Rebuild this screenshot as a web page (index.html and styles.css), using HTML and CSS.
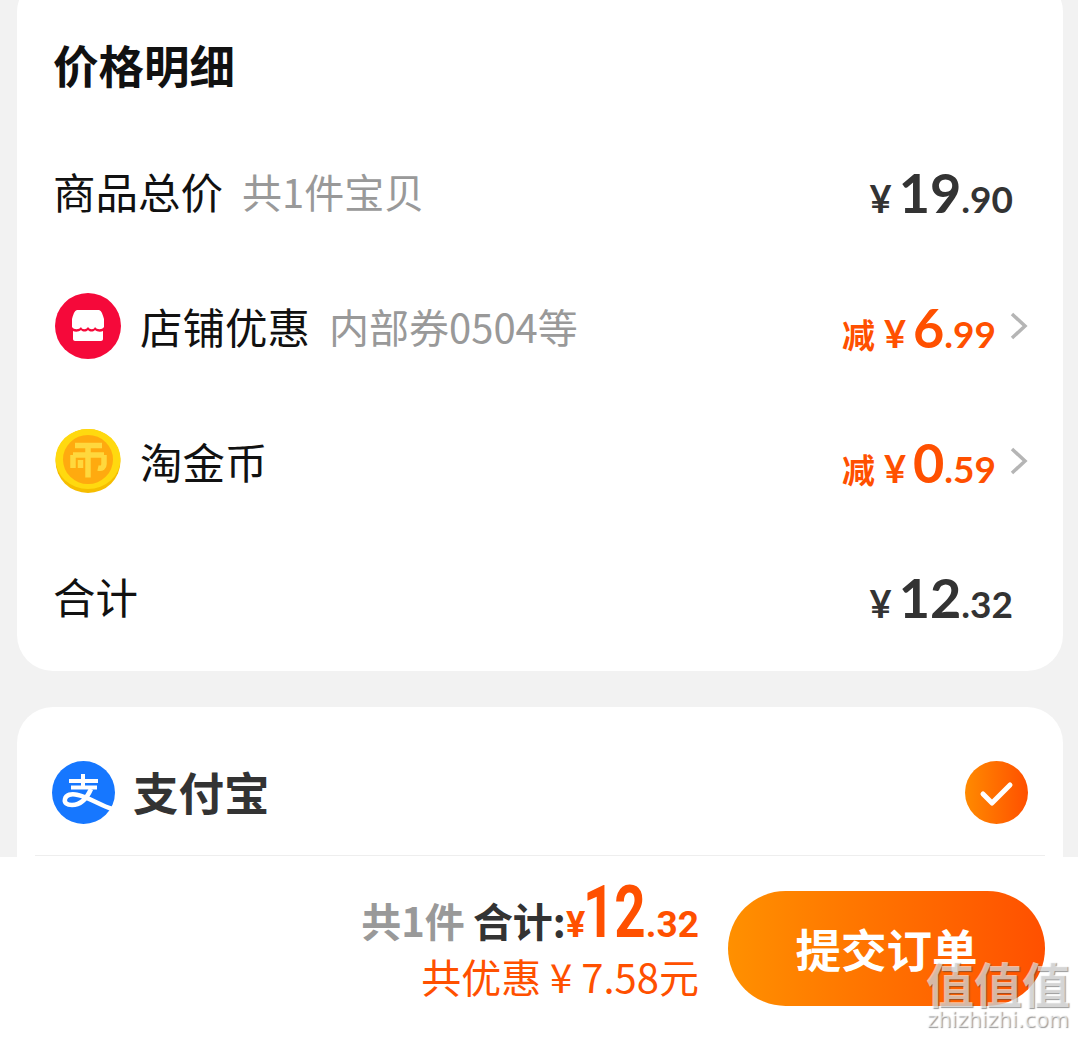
FILE: index.html
```html
<!DOCTYPE html>
<html lang="zh">
<head>
  <meta charset="utf-8" />
  <title>价格明细</title>
  <link rel="stylesheet" href="styles.css">
</head>
<body>
  <div class="page">
    <div class="main">
      <!-- price card -->
      <div class="card card--price">
        <h2 class="card__title">价格明细</h2>

        <div class="row">
          <div class="row__left">
            <span class="row__label">商品总价</span>
            <span class="row__sub">共1件宝贝</span>
          </div>
          <div class="price"><span class="price__sym">¥</span><span class="price__int">19</span><span class="price__dec">.90</span></div>
        </div>

        <div class="row row--more">
          <div class="row__left">
            <svg class="row__icon" viewBox="0 0 66 66">
              <circle cx="33" cy="33" r="33" fill="#f5093a"/>
              <path d="M23 17h20c3 0 4 2 6 9v8c-2 3-7 3-9 0-1 3-5 3-7 0-2 3-6 3-7 0-2 3-7 3-9 0v-8c2-7 3-9 6-9z" fill="#fff"/>
              <path d="M18 38c2 1 6 1 8-1 2 2 5 2 7 0 2 2 5 2 7 0 2 2 6 2 8 1v8c0 1-1 2-2 2H20c-1 0-2-1-2-2z" fill="#fff"/>
            </svg>
            <span class="row__label">店铺优惠</span>
            <span class="row__sub">内部券0504等</span>
          </div>
          <div class="price price--cut"><span class="price__cut">减</span><span class="price__sym">¥</span><span class="price__int">6</span><span class="price__dec">.99</span></div>
          <svg class="chevron" viewBox="0 0 18 28"><path d="M2 2l13 12L2 26" fill="none" stroke="#b5b5b5" stroke-width="3.500"/></svg>
        </div>

        <div class="row row--more">
          <div class="row__left">
            <svg class="row__icon" viewBox="0 0 66 66">
              <ellipse cx="33" cy="33" rx="32.500" ry="32" fill="#f6bd00"/>
              <ellipse cx="33" cy="31" rx="32.500" ry="30" fill="#ffd90f"/>
              <ellipse cx="33" cy="31.500" rx="25" ry="24.500" fill="#ffaa0f"/>
              <path d="M20 17.500h27M33 17.500v32M18 27h31M18 27v13M49 27v9c0 3-2 5-6 4M25.500 32v8" fill="none" stroke="#ffd83d" stroke-width="5.500"/>
            </svg>
            <span class="row__label">淘金币</span>
          </div>
          <div class="price price--cut"><span class="price__cut">减</span><span class="price__sym">¥</span><span class="price__int">0</span><span class="price__dec">.59</span></div>
          <svg class="chevron" viewBox="0 0 18 28"><path d="M2 2l13 12L2 26" fill="none" stroke="#b5b5b5" stroke-width="3.500"/></svg>
        </div>

        <div class="row">
          <div class="row__left">
            <span class="row__label">合计</span>
          </div>
          <div class="price"><span class="price__sym">¥</span><span class="price__int">12</span><span class="price__dec">.32</span></div>
        </div>
      </div>

      <!-- pay card -->
      <div class="card card--pay">
        <div class="pay">
          <div class="pay__left">
            <svg class="pay__icon" viewBox="0 0 63 63">
              <circle cx="31.500" cy="31.500" r="31.500" fill="#1677ff"/>
              <path d="M17 20h29M31 13v13M19 26.500h26" fill="none" stroke="#fff" stroke-width="4"/>
              <path d="M39 28c-4 9-10 16-19 16-5 0-8-2-7-6 1-4 6-6 13-4 10 2 22 10 34 14" fill="none" stroke="#fff" stroke-width="4.500"/>
            </svg>
            <span class="pay__name">支付宝</span>
          </div>
          <svg class="pay__check" viewBox="0 0 63 63">
            <defs>
              <linearGradient id="chk"><stop offset="0" stop-color="#ff8a00"/><stop offset="1" stop-color="#ff5000"/></linearGradient>
            </defs>
            <circle cx="31.500" cy="31.500" r="31.500" fill="url(#chk)"/>
            <path d="M18 33l9 9 18-18" fill="none" stroke="#fff" stroke-width="5" stroke-linecap="round" stroke-linejoin="round"/>
          </svg>
        </div>
      </div>
    </div>

    <!-- bottom bar -->
    <div class="bar">
      <div class="bar__sum">
        <div class="bar__total">
          <span class="bar__count">共1件</span>
          <span class="bar__word">合计:</span><span class="bar__sym">¥</span><span class="bar__int">12</span><span class="bar__dec">.32</span>
        </div>
        <div class="bar__save">共优惠 ¥ 7.58元</div>
      </div>
      <div class="bar__btn">提交订单</div>
    </div>

    <div class="mark">
      <div class="mark__big">值值值</div>
      <div class="mark__small">zhizhizhi.com</div>
    </div>
  </div>
</body>
</html>
```

FILE: styles.css
```css
* {
  margin: 0;
  padding: 0;
  box-sizing: border-box;
}

body {
  background: #f2f2f2;
  font-family: "Noto Sans CJK SC", "Noto Sans", sans-serif;
  color: #111;
}

.page {
  position: relative;
  height: 1039px;
  display: flex;
  flex-direction: column;
  overflow: hidden;
}

.main {
  height: 857px;
  overflow: hidden;
  padding: 0 15px 0 17px;
}

/* cards */
.card {
  background: #fff;
  border-radius: 36px;
}
.card--price {
  margin-top: -24px;
  padding: 52px 0 5px;
}
.card--pay {
  margin-top: 36px;
  height: 300px;
  padding: 0 18px;
}
.card__title {
  height: 72px;
  line-height: 72px;
  margin-bottom: 26px;
  padding-left: 36px;
  font-size: 45.500px;
  font-weight: 700;
}

/* rows */
.row {
  height: 135px;
  display: flex;
  align-items: center;
  justify-content: space-between;
  padding: 0 50px 0 36px;
}
.row--more {
  padding-right: 35px;
}
.row__left {
  flex: 1;
  display: flex;
  align-items: center;
  padding-bottom: 6px;
}
.row__icon {
  width: 66px;
  height: 66px;
  margin: 0 19px 0 2px;
}
.row__label {
  font-size: 42.500px;
  line-height: 60px;
}
.row__sub {
  font-size: 40px;
  line-height: 60px;
  color: #999;
  margin-left: 19px;
}

/* prices */
.price {
  display: flex;
  align-items: baseline;
  margin-bottom: 2px;
  font-family: Lato, "Noto Sans CJK SC", sans-serif;
  font-weight: 700;
  color: #333;
}
.price__sym {
  font-size: 38px;
  margin-right: 7px;
}
.price__int {
  font-size: 54px;
}
.price__dec {
  font-size: 37px;
}
.price--cut {
  color: #ff5000;
  margin-bottom: 3px;
}
.price__cut {
  font-family: "Noto Sans CJK SC", sans-serif;
  font-size: 33px;
  margin-right: 9px;
}
.chevron {
  width: 18px;
  height: 28px;
  margin: -6px 0 0 14px;
}

/* pay row */
.pay {
  height: 149px;
  display: flex;
  align-items: center;
  justify-content: space-between;
  padding: 23px 17px 0 17px;
  border-bottom: 1px solid #eee;
}
.pay__left {
  display: flex;
  align-items: center;
}
.pay__icon {
  width: 63px;
  height: 63px;
  margin-right: 18px;
}
.pay__name {
  font-size: 45.500px;
  line-height: 60px;
  margin-top: -3px;
  font-weight: 700;
  color: #333;
}
.pay__check {
  width: 63px;
  height: 63px;
}

/* bottom bar */
.bar {
  flex: 1;
  background: #fff;
  display: flex;
  justify-content: flex-end;
  align-items: flex-start;
  padding: 24px 33px 0 0;
}
.bar__sum {
  text-align: right;
  margin-right: 29px;
  font-size: 40px;
  line-height: 50px;
}
.bar__total {
  display: flex;
  align-items: baseline;
  justify-content: flex-end;
  font-weight: 700;
  height: 70px;
  padding-top: 7px;
}
.bar__count {
  color: #999;
  margin-right: 8px;
}
.bar__word {
  color: #333;
}
.bar__sym {
  color: #ff5000;
  font-family: Roboto, sans-serif;
  font-size: 36px;
}
/* the big digits in the reference are condensed, and no narrow face is installed */
.bar__int {
  color: #ff5000;
  font-family: Roboto, sans-serif;
  font-size: 72px;
  transform: scaleX(0.76);
  margin: 0 -10px 0 -12px;
}
.bar__dec {
  color: #ff5000;
  font-family: Roboto, sans-serif;
  font-size: 37px;
}
.bar__save {
  color: #ff5000;
}
.bar__btn {
  width: 317px;
  height: 115px;
  margin-top: 10px;
  border-radius: 58px;
  background: linear-gradient(to right, #ff9000, #ff5000);
  color: #fff;
  font-size: 45.500px;
  font-weight: 700;
  line-height: 115px;
  text-align: center;
}

/* watermark over the corner */
.mark {
  position: absolute;
  right: 8px;
  bottom: 6px;
  color: rgba(255, 255, 255, 0.6);
  text-align: center;
  text-shadow: 1px 1px 1px rgba(70, 70, 70, 0.55);
}
.mark__big {
  font-size: 48px;
  line-height: 50px;
  font-weight: 700;
}
.mark__small {
  font-family: "DejaVu Sans", sans-serif;
  font-size: 21px;
  line-height: 26px;
}
```
